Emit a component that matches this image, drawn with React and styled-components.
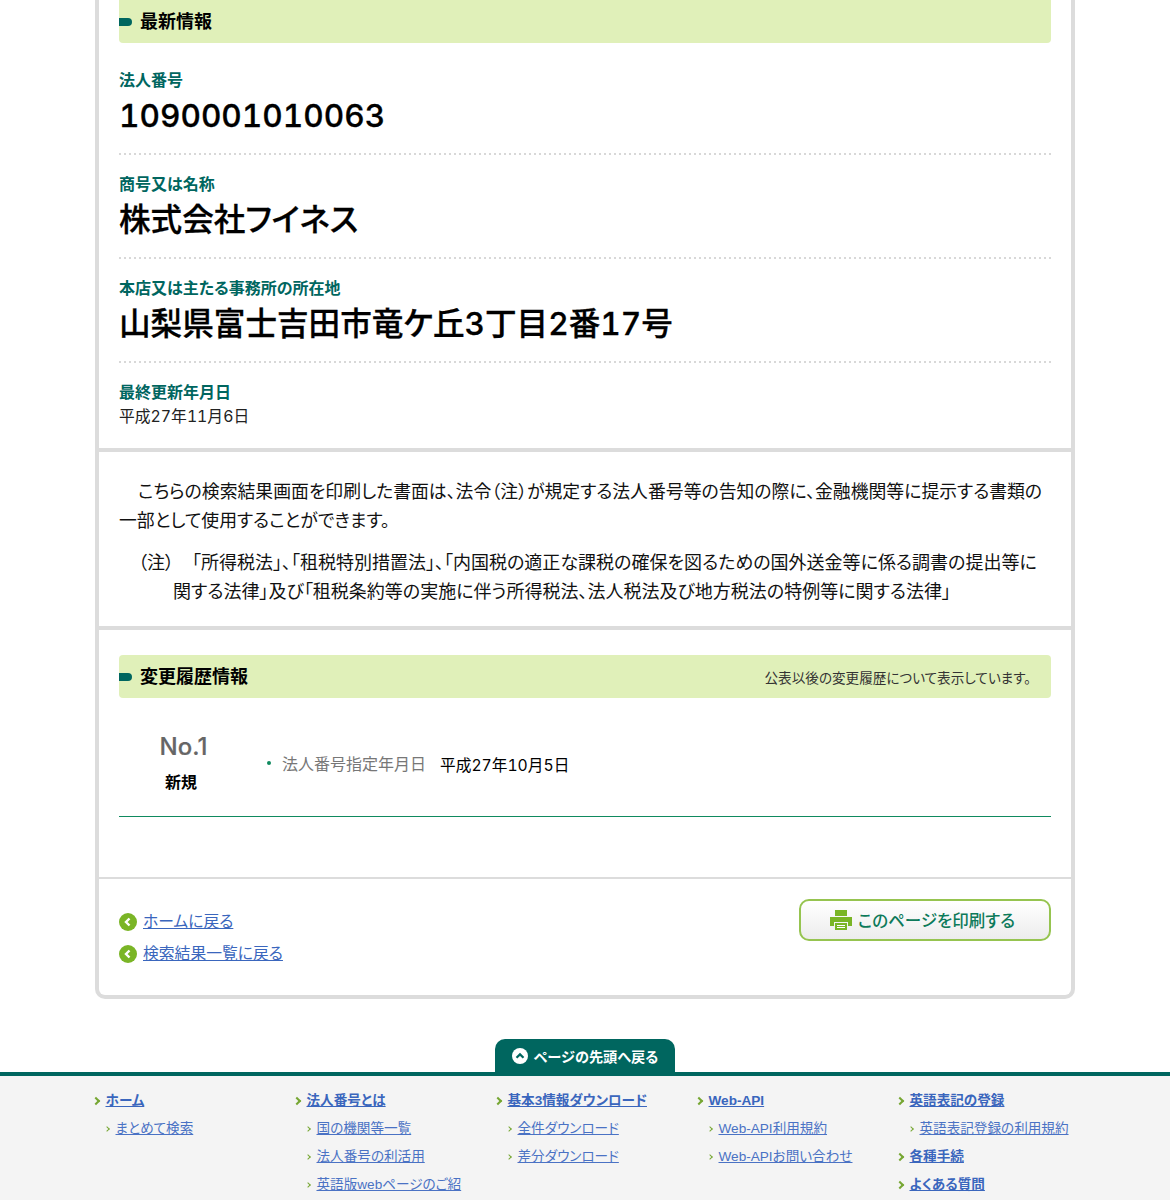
import React from "react";
import styled, { createGlobalStyle } from "styled-components";

const Global = createGlobalStyle`
  html, body { margin: 0; padding: 0; background: #fff; }
  body {
    font-family: Inter, "Noto Sans CJK JP", sans-serif;
    font-feature-settings: "palt", "tnum";
    color: #000;
    font-size: 16px;
  }
  #root { height: 1200px; overflow: hidden; }
  * { box-sizing: border-box; }
`;

const Card = styled.main`
  width: 980px;
  margin: 0 auto;
  border: 4px solid #dcdcdc;
  border-top: 0;
  border-radius: 0 0 10px 10px;
`;
const Section = styled.section`
  padding: ${(p) => p.$pad};
  border-bottom: ${(p) => p.$line || "0"} solid #dcdcdc;
`;
const Bar = styled.div`
  position: relative;
  height: 43px;
  background: #e0f0b9;
  border-radius: ${(p) => (p.$top ? "0 0 4px 4px" : "4px")};
  display: flex;
  align-items: center;
  justify-content: space-between;
  padding: 0 20px 0 21px;
  &::before {
    content: "";
    position: absolute;
    left: 0;
    top: 18px;
    width: 13px;
    height: 8px;
    background: #00665f;
    border-radius: 0 4px 4px 0;
  }
`;
const BarTitle = styled.h2`
  margin: 0;
  font-size: 18px;
  font-weight: 700;
  line-height: 43px;
`;
const BarNote = styled.span`
  font-size: 13.6px;
  color: #333;
`;
const Field = styled.div`
  padding: ${(p) => p.$pad || "19px 0 14px"};
  background-image: ${(p) =>
    p.$last ? "none" : "linear-gradient(to right, #d8d8d8 2px, transparent 2px)"};
  background-size: 5px 2px;
  background-repeat: repeat-x;
  background-position: left bottom;
`;
const Label = styled.div`
  font-size: 16px;
  font-weight: 700;
  color: #00665f;
  line-height: 20px;
`;
const Big = styled.div`
  font-size: 31.6px;
  font-weight: 500;
  line-height: 50px;
  margin-top: 1px;
  -webkit-text-stroke: 0.3px #000;
`;
const Small = styled.div`
  font-size: 15.8px;
  line-height: 24px;
  color: #222;
  margin-top: 3px;
`;
const Para = styled.p`
  margin: 0;
  font-size: 17.85px;
  line-height: 29px;
  color: #111;
  text-indent: 19px;
`;
const Note = styled.p`
  margin: 13px 0 0;
  font-size: 18px;
  line-height: 29px;
  color: #111;
  padding-left: 54px;
  text-indent: -35px;
`;
const History = styled.div`
  display: flex;
  align-items: center;
  height: 119px;
  border-bottom: 1px solid #0f8a5f;
`;
const HistNo = styled.div`
  width: 124px;
  text-align: center;
  margin-top: 10px;
`;
const NoText = styled.div`
  font-size: 24px;
  font-weight: 500;
  color: #666;
  line-height: 30px;
  padding-left: 5px;
  font-feature-settings: "palt";
  -webkit-text-stroke: 0.2px #666;
`;
const NoKind = styled.div`
  font-size: 16px;
  font-weight: 700;
  line-height: 20px;
  margin-top: 10px;
`;
const HistItem = styled.div`
  display: flex;
  align-items: center;
  font-size: 16px;
  margin-left: 24px;
  margin-top: 12px;
  &::before {
    content: "";
    width: 4px;
    height: 4px;
    border-radius: 50%;
    background: #0f8a5f;
    margin-right: 11px;
  }
`;
const HistLabel = styled.span`
  color: #777;
  margin-right: 14px;
`;
const HistValue = styled.span`
  font-size: 15.7px;
  position: relative;
  top: 1px;
`;
const Actions = styled.div`
  display: flex;
  justify-content: space-between;
  align-items: flex-start;
`;
const BackList = styled.div`
  display: flex;
  flex-direction: column;
  gap: 10px;
  padding-top: 12px;
`;
const BackLink = styled.a`
  display: flex;
  align-items: center;
  gap: 6px;
  font-size: 15.8px;
  line-height: 22px;
  color: #3a66bd;
  span { text-decoration: underline; }
`;
const PrintButton = styled.button`
  width: 252px;
  height: 42px;
  border: 2px solid #96c450;
  border-radius: 10px;
  background: linear-gradient(#fff, #ececec);
  display: flex;
  align-items: center;
  justify-content: center;
  gap: 6px;
  padding: 0 5px 0 0;
  font: inherit;
  font-size: 16.5px;
  font-weight: 500;
  color: #0d7a5a;
  font-feature-settings: "palt";
`;
const Foot = styled.footer`
  margin-top: 40px;
`;
const TopTabRow = styled.div`
  display: flex;
  justify-content: center;
`;
const TopTab = styled.a`
  width: 180px;
  height: 33px;
  background: #00665f;
  color: #fff;
  font-size: 14.2px;
  font-weight: 700;
  border-radius: 10px 10px 0 0;
  display: flex;
  align-items: center;
  justify-content: center;
  gap: 6px;
`;
const FootBody = styled.div`
  background: #f4f4f4;
  border-top: 4px solid #00665f;
  height: 300px;
  font-family: "Liberation Sans", "Noto Sans CJK JP", sans-serif;
`;
const Columns = styled.div`
  width: 985px;
  margin: 0 auto;
  padding: 14px 0 0 0;
  display: grid;
  grid-template-columns: repeat(5, 201px);
`;
const Col = styled.div`
  display: flex;
  flex-direction: column;
`;
const Head = styled.a`
  font-size: 13.6px;
  font-weight: 700;
  line-height: 22px;
  padding-left: 13px;
  color: #3a66bd;
  position: relative;
  margin-bottom: 6px;
  span { text-decoration: underline; }
  &::before {
    content: "";
    position: absolute;
    left: 0;
    top: 8px;
    width: 4px;
    height: 4px;
    border-top: 2px solid #76a632;
    border-right: 2px solid #76a632;
    transform: rotate(45deg);
  }
`;
const Sub = styled.a`
  font-size: 13.6px;
  line-height: 22px;
  padding-left: 23px;
  width: 176px;
  color: #4a72c4;
  position: relative;
  margin-bottom: 6px;
  span { text-decoration: underline; }
  &::before {
    content: "";
    position: absolute;
    left: 12px;
    top: 9px;
    width: 3px;
    height: 3px;
    border-top: 1px solid #76a632;
    border-right: 1px solid #76a632;
    transform: rotate(45deg);
  }
`;

const Back = () => (
  <svg width="18" height="18" viewBox="0 0 18 18">
    <circle cx="9" cy="9" r="9" fill="#7ab526" />
    <path d="M10.5 5.5 7 9l3.5 3.5" fill="none" stroke="#fff" strokeWidth="2.4" />
  </svg>
);
const Up = () => (
  <svg width="16" height="16" viewBox="0 0 16 16">
    <circle cx="8" cy="8" r="8" fill="#fff" />
    <path d="M4.5 9.8 8 6.4l3.5 3.4" fill="none" stroke="#00665f" strokeWidth="2.2" />
  </svg>
);
const Printer = () => (
  <svg width="22" height="20" viewBox="0 0 22 20">
    <path d="M5 0h12v6H5z" fill="#7ab526" />
    <path d="M0 7h22v9h-4v-4H4v4H0z" fill="#7ab526" />
    <path d="M5 13h12v7H5z" fill="#7ab526" />
    <path d="M7 15h8v1H7zM7 17h8v1H7z" fill="#fff" />
  </svg>
);

const columns = [
  { items: [["h", "ホーム"], ["s", "まとめて検索"]] },
  { items: [["h", "法人番号とは"], ["s", "国の機関等一覧"], ["s", "法人番号の利活用"], ["s", "英語版webページのご紹介"]] },
  { items: [["h", "基本3情報ダウンロード"], ["s", "全件ダウンロード"], ["s", "差分ダウンロード"]] },
  { items: [["h", "Web-API"], ["s", "Web-API利用規約"], ["s", "Web-APIお問い合わせ"]] },
  { items: [["h", "英語表記の登録"], ["s", "英語表記登録の利用規約"], ["h", "各種手続"], ["h", "よくある質問"]] },
];

export default function App() {
  return (
    <>
      <Global />
      <Card>
        <Section $pad="0 20px 19px" $line="4px">
          <Bar $top>
            <BarTitle>最新情報</BarTitle>
          </Bar>
          <Field $pad="27px 0 14px">
            <Label>法人番号</Label>
            <Big>1090001010063</Big>
          </Field>
          <Field>
            <Label>商号又は名称</Label>
            <Big>株式会社フイネス</Big>
          </Field>
          <Field>
            <Label>本店又は主たる事務所の所在地</Label>
            <Big>山梨県富士吉田市竜ケ丘3丁目2番17号</Big>
          </Field>
          <Field $pad="19px 0 0" $last>
            <Label>最終更新年月日</Label>
            <Small>平成27年11月6日</Small>
          </Field>
        </Section>
        <Section $pad="25px 20px 20px" $line="4px">
          <Para>こちらの検索結果画面を印刷した書面は、法令（注）が規定する法人番号等の告知の際に、金融機関等に提示する書類の一部として使用することができます。</Para>
          <Note>（注）　「所得税法」、「租税特別措置法」、「内国税の適正な課税の確保を図るための国外送金等に係る調書の提出等に関する法律」及び「租税条約等の実施に伴う所得税法、法人税法及び地方税法の特例等に関する法律」</Note>
        </Section>
        <Section $pad="25px 20px 60px" $line="2px">
          <Bar>
            <BarTitle>変更履歴情報</BarTitle>
            <BarNote>公表以後の変更履歴について表示しています。</BarNote>
          </Bar>
          <History>
            <HistNo>
              <NoText>No.1</NoText>
              <NoKind>新規</NoKind>
            </HistNo>
            <HistItem>
              <HistLabel>法人番号指定年月日</HistLabel>
              <HistValue>平成27年10月5日</HistValue>
            </HistItem>
          </History>
        </Section>
        <Section $pad="20px 20px 30px">
          <Actions>
            <BackList>
              <BackLink><Back /><span>ホームに戻る</span></BackLink>
              <BackLink><Back /><span>検索結果一覧に戻る</span></BackLink>
            </BackList>
            <PrintButton><Printer />このページを印刷する</PrintButton>
          </Actions>
        </Section>
      </Card>
      <Foot>
        <TopTabRow>
          <TopTab><Up />ページの先頭へ戻る</TopTab>
        </TopTabRow>
        <FootBody>
          <Columns>
            {columns.map((c, i) => (
              <Col key={i}>
                {c.items.map(([k, t]) =>
                  k === "h" ? <Head key={t}><span>{t}</span></Head> : <Sub key={t}><span>{t}</span></Sub>
                )}
              </Col>
            ))}
          </Columns>
        </FootBody>
      </Foot>
    </>
  );
}
